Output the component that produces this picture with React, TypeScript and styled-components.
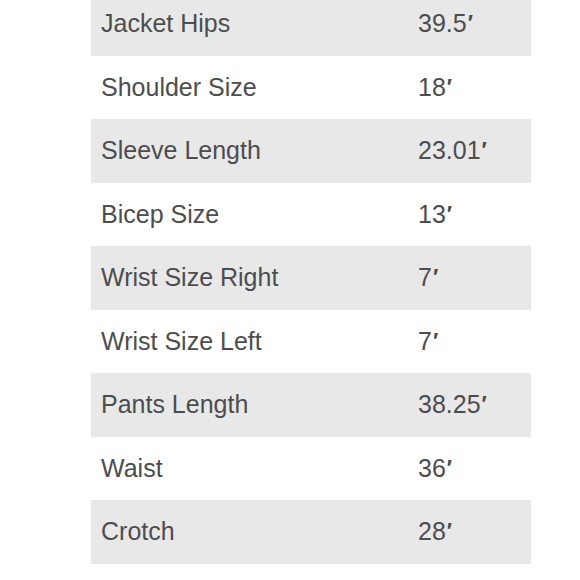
import React from "react";
import styled, { createGlobalStyle } from "styled-components";

const Global = createGlobalStyle`
  html, body { margin: 0; padding: 0; background: #fff; overflow: hidden; }
`;

const Page = styled.div`
  width: 580px;
  height: 580px;
  overflow: hidden;
  padding-left: 91px;
  box-sizing: border-box;
`;

const Table = styled.div`
  width: 440px;
  margin-top: -8px;
  display: flex;
  flex-direction: column;
`;

const Row = styled.div<{ $shaded: boolean }>`
  height: 63.5px;
  display: grid;
  grid-template-columns: 327px 1fr;
  align-items: center;
  background: ${(p) => (p.$shaded ? "#e8e8e8" : "#ffffff")};
  font-family: "Liberation Sans", Arial, sans-serif;
  font-size: 25px;
  color: #4d4d4d;
`;

const Label = styled.div`
  padding-left: 10px;
`;

const Value = styled.div``;

const Inch = styled.span`
  display: inline-block;
  margin-left: 1px;
  font-size: 22px;
  font-weight: bold;
  vertical-align: 2px;
`;

const rows: [string, string][] = [
  ["Jacket Hips", "39.5"],
  ["Shoulder Size", "18"],
  ["Sleeve Length", "23.01"],
  ["Bicep Size", "13"],
  ["Wrist Size Right", "7"],
  ["Wrist Size Left", "7"],
  ["Pants Length", "38.25"],
  ["Waist", "36"],
  ["Crotch", "28"],
];

export default function App() {
  return (
    <Page>
      <Global />
      <Table>
        {rows.map(([k, v], i) => (
          <Row key={k} $shaded={i % 2 === 0}>
            <Label>{k}</Label>
            <Value>
              {v}
              <Inch>′</Inch>
            </Value>
          </Row>
        ))}
      </Table>
    </Page>
  );
}
